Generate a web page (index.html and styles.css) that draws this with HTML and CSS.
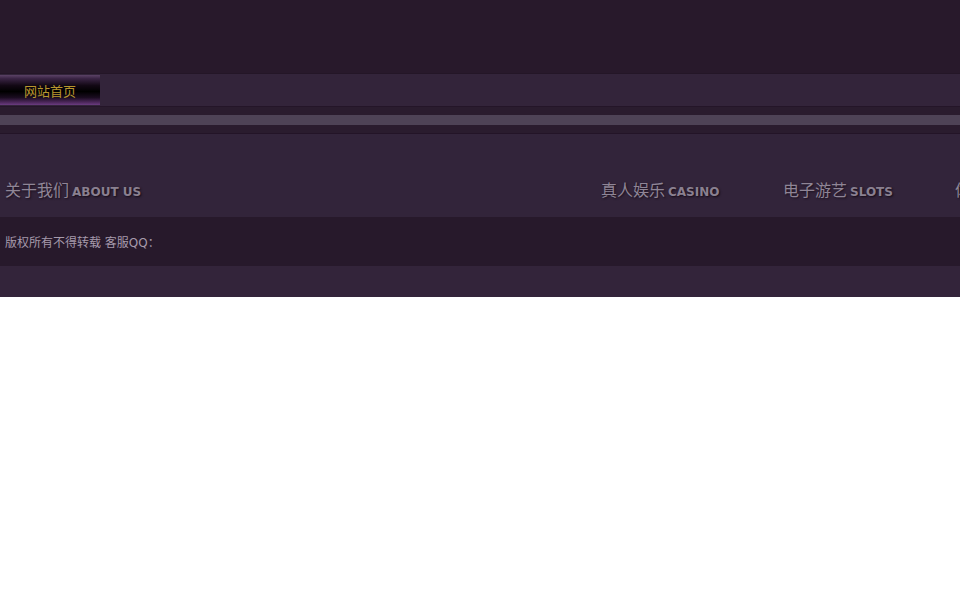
FILE: index.html
```html
<!DOCTYPE html>
<html lang="zh-CN">
<head>
<meta charset="utf-8">
<title>首页</title>
<link rel="stylesheet" href="styles.css">
</head>
<body>
<div class="page">
  <header class="top"></header>
  <nav class="menu">
    <a class="menu-btn" href="#">网站首页</a>
  </nav>
  <div class="band">
    <div class="band-bar"></div>
  </div>
  <section class="cats">
    <div class="cat cat-first"><span class="cn">关于我们</span><span class="en">ABOUT US</span></div>
    <div class="cat cat-casino"><span class="cn">真人娱乐</span><span class="en">CASINO</span></div>
    <div class="cat cat-slots"><span class="cn">电子游艺</span><span class="en">SLOTS</span></div>
    <div class="cat"><span class="cn">体育投注</span><span class="en">SPORTS</span></div>
  </section>
  <div class="info"><span>版权所有不得转载 客服QQ：</span></div>
  <footer class="foot"></footer>
</div>
</body>
</html>
```
FILE: styles.css
```css
html, body {
  margin: 0;
  padding: 0;
  background: #ffffff;
}
body {
  font-family: "DejaVu Sans", "Noto Sans CJK SC", sans-serif;
}
.page {
  width: 960px;
  overflow: hidden;
  background: #2f2236;
}
.top {
  height: 73px;
  background: #28192b;
  border-bottom: 1px solid #241627;
}
.menu {
  height: 32px;
  background: #33243a;
  display: flex;
  align-items: center;
}
.menu-btn {
  width: 100px;
  height: 30px;
  display: flex;
  align-items: center;
  justify-content: center;
  text-decoration: none;
  color: #b8962e;
  font-size: 13px;
  background: linear-gradient(to bottom, #5b4266 0%, #3a2444 12%, #120814 35%, #000000 55%, #1a0c20 75%, #4a2658 90%, #6b3c80 100%);
}
.band {
  height: 28px;
  background: #2a1c2e;
  display: flex;
  flex-direction: column;
  justify-content: center;
  border-top: 1px solid #241528;
  border-bottom: 1px solid #231427;
  box-sizing: border-box;
}
.band-bar {
  height: 10px;
  background: #4e4356;
}
.cats {
  height: 83px;
  background: #32243a;
  display: flex;
  align-items: flex-end;
  padding: 0 0 16px 5px;
  box-sizing: border-box;
  white-space: nowrap;
}
.cat {
  display: flex;
  align-items: baseline;
  flex: none;
}
.cat-first {
  width: 596px;
}
.cat-casino {
  width: 182px;
}
.cat-slots {
  width: 172px;
}
.cn {
  font-size: 16px;
  color: #8f8596;
  text-shadow: 1px 1px 2px #1a0f1d;
  margin-right: 3px;
}
.en {
  font-size: 12px;
  font-weight: bold;
  color: #8a8090;
  text-shadow: 1px 1px 2px #140a17;
}
.info {
  height: 49px;
  background: #27192b;
  display: flex;
  align-items: center;
  padding-left: 5px;
  font-size: 12px;
  color: #a69aab;
}
.foot {
  height: 31px;
  background: #33243a;
}
```
